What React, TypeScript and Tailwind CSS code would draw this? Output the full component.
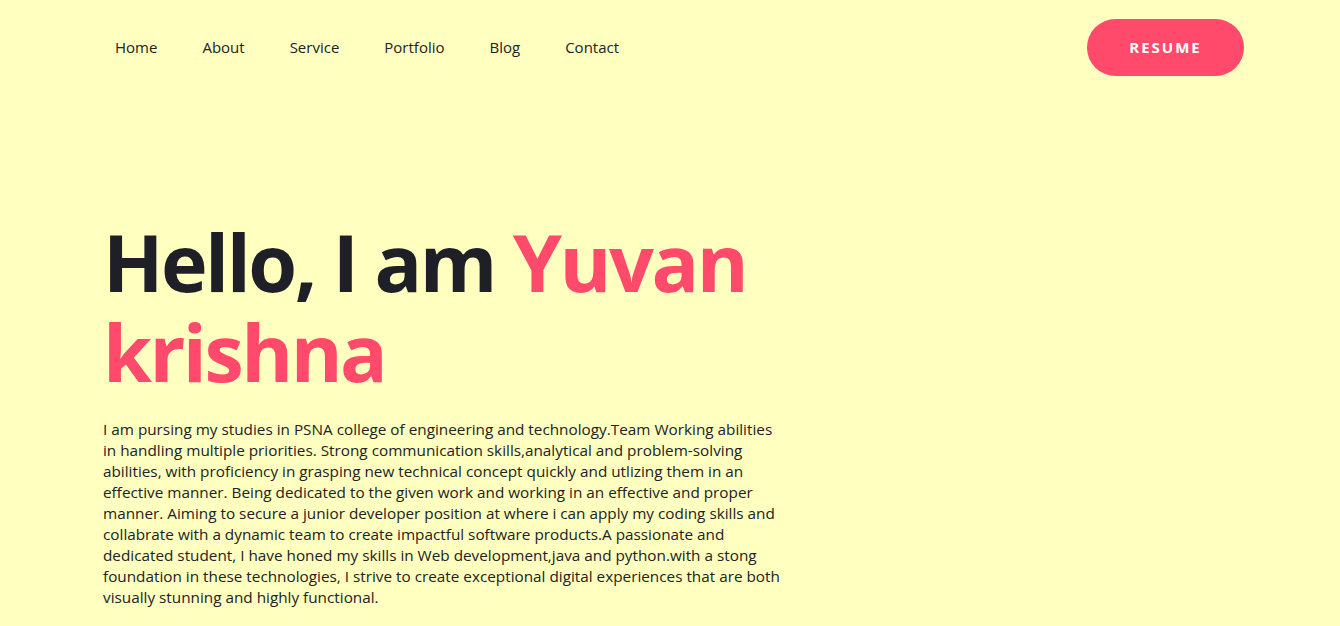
export default function App() {
  const nav = ["Home", "About", "Service", "Portfolio", "Blog", "Contact"];
  return (
    <div className="min-h-[626px] w-full bg-[#ffffc0] font-['Open_Sans',sans-serif] text-[#1f1f27]">
      <header className="flex items-center justify-between pl-[92.5px] pr-[96px] pt-[19px]">
        <nav className="flex items-center">
          {nav.map((n) => (
            <a key={n} className="px-[22.5px] text-[15px] text-[#222]">{n}</a>
          ))}
        </nav>
        <button className="h-[57px] w-[157px] rounded-full bg-[#ff4a6b] text-[15px] font-bold tracking-[2px] text-white">
          RESUME
        </button>
      </header>
      <main className="pl-[103px] pt-[141px]">
        <h1 className="w-[690px] text-[79px] font-bold leading-[90px] tracking-[-2.5px]">
          Hello, I am <span className="text-[#ff4a6b]">Yuvan krishna</span>
        </h1>
        <p className="mt-[22px] w-[680px] text-[15.3px] leading-[21px] text-[#222]">
          I am pursing my studies in PSNA college of engineering and technology.Team Working abilities in handling multiple priorities. Strong communication skills,analytical and problem-solving abilities, with proficiency in grasping new technical concept quickly and utlizing them in an effective manner. Being dedicated to the given work and working in an effective and proper manner. Aiming to secure a junior developer position at where i can apply my coding skills and collabrate with a dynamic team to create impactful software products.A passionate and dedicated student, I have honed my skills in Web development,java and python.with a stong foundation in these technologies, I strive to create exceptional digital experiences that are both visually stunning and highly functional.
        </p>
      </main>
    </div>
  );
}
